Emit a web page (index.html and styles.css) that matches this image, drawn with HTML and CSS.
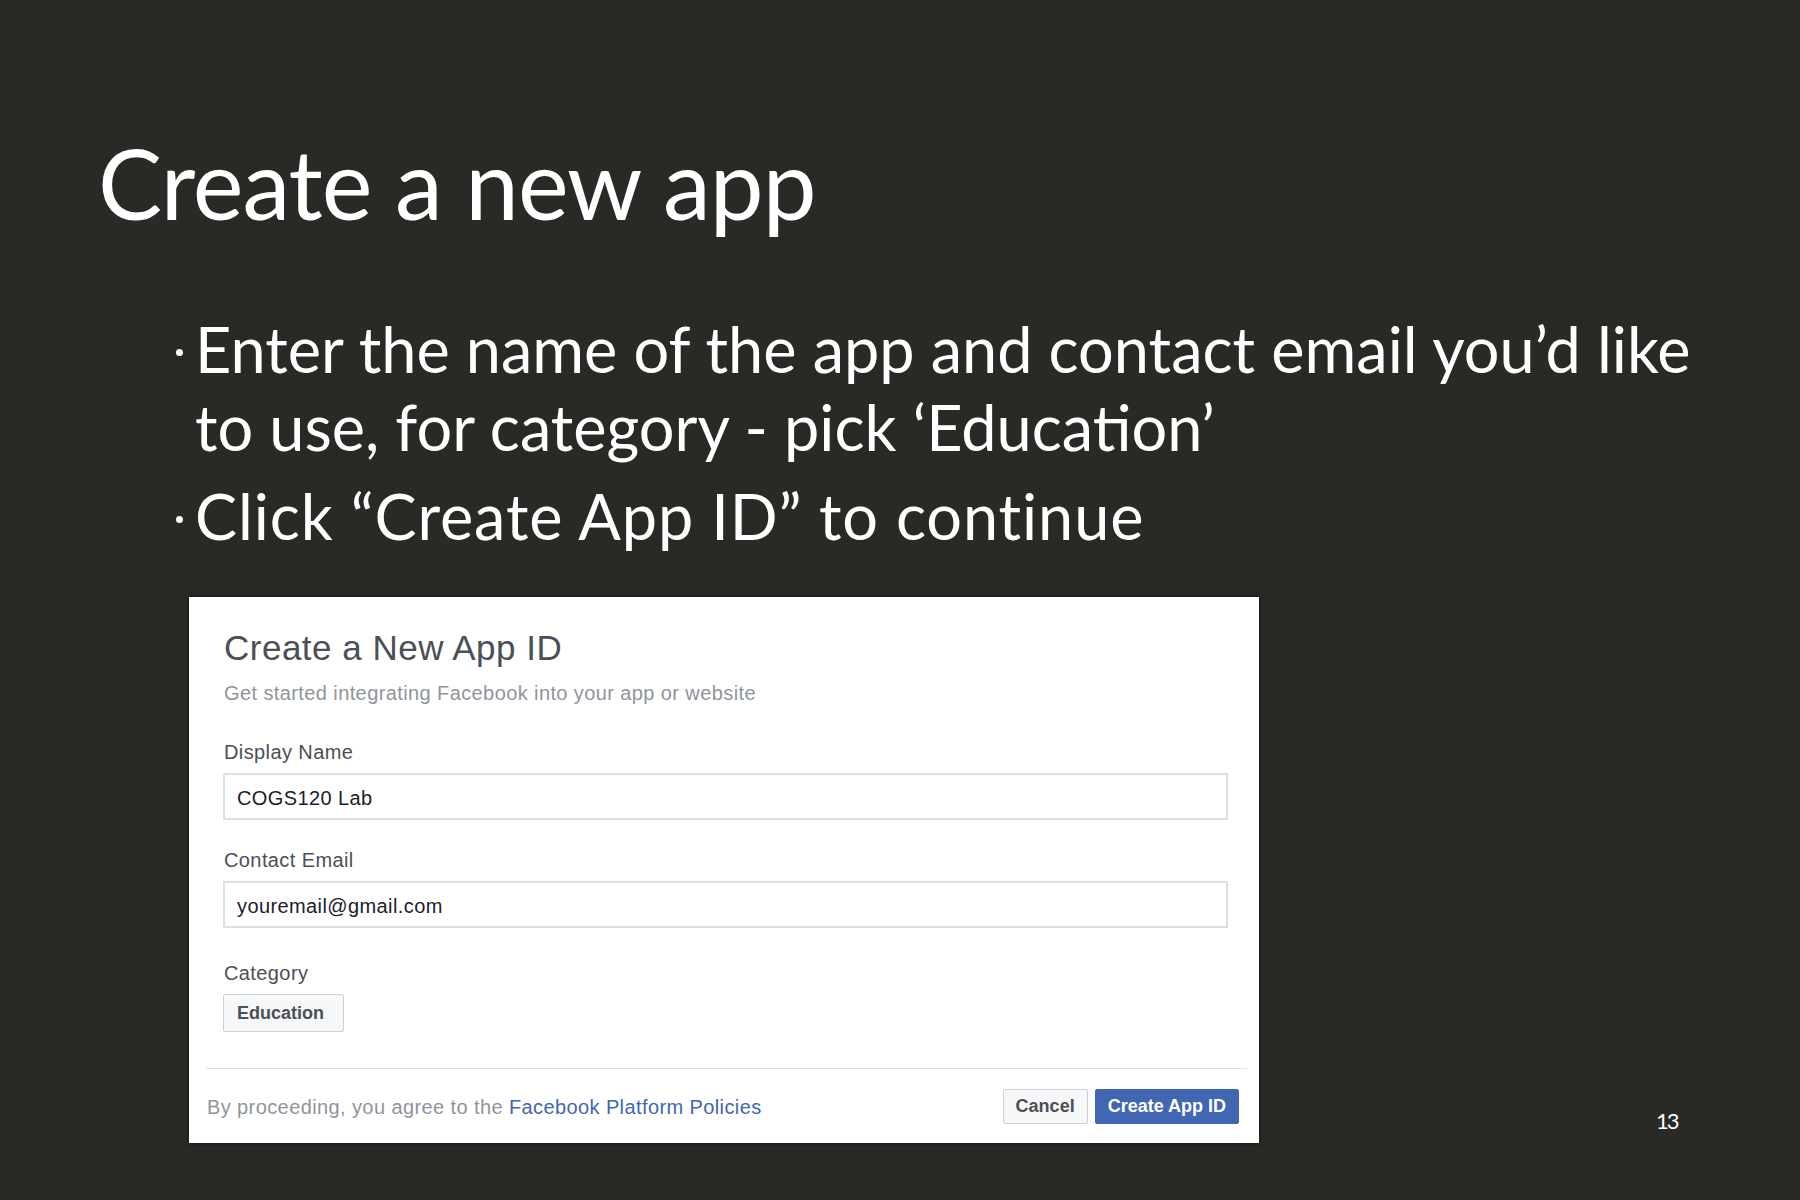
FILE: index.html
```html
<!DOCTYPE html>
<html>
<head>
<meta charset="utf-8">
<link rel="stylesheet" href="styles.css">
</head>
<body>
<div class="slide">
  <h1 class="slide-title">Create a new app</h1>
  <ul class="bullets">
    <li class="bullet"><span class="dot"></span><span class="btext">Enter the name of the app and contact email you’d like<br>to use, for category - pick ‘Education’</span></li>
    <li class="bullet"><span class="dot"></span><span class="btext btext-loose">Click “Create App ID” to continue</span></li>
  </ul>
  <div class="bottom-row">
    <div class="panel">
      <div class="panel-body">
        <div class="p-title">Create a New App ID</div>
        <div class="p-sub">Get started integrating Facebook into your app or website</div>
        <div class="field field-first">
          <div class="label">Display Name</div>
          <div class="input">COGS120 Lab</div>
        </div>
        <div class="field">
          <div class="label">Contact Email</div>
          <div class="input">youremail@gmail.com</div>
        </div>
        <div class="field field-cat">
          <div class="label">Category</div>
          <div class="select">Education</div>
        </div>
      </div>
      <div class="panel-foot">
        <div class="foot-text">By proceeding, you agree to the <span class="link">Facebook Platform Policies</span></div>
        <div class="foot-buttons">
          <div class="btn btn-cancel">Cancel</div>
          <div class="btn btn-primary">Create App ID</div>
        </div>
      </div>
    </div>
    <div class="page-num">13</div>
  </div>
</div>
</body>
</html>
```
FILE: styles.css
```css
html, body {
  margin: 0;
  padding: 0;
}
body {
  background: #292925;
  width: 1800px;
  height: 1200px;
  overflow: hidden;
}
.slide {
  width: 1800px;
  height: 1200px;
  box-sizing: border-box;
  padding-top: 133px;
  font-family: Lato, "Open Sans", sans-serif;
  color: #ffffff;
}
.slide-title {
  margin: 0 0 0 98px;
  font-weight: 400;
  font-size: 96px;
  line-height: 100px;
  letter-spacing: -1px;
}
.bullets {
  list-style: none;
  margin: 77px 0 0 176px;
  padding: 0;
}
.bullet {
  display: flex;
  font-size: 63px;
  line-height: 78px;
}
.bullet + .bullet {
  margin-top: 11px;
}
.btext-loose {
  letter-spacing: 0.9px;
}
.dot {
  flex: none;
  width: 7px;
  height: 7px;
  border-radius: 50%;
  background: #fff;
  margin: 39px 12px 0 0;
}
.bottom-row {
  display: flex;
  align-items: flex-end;
  margin: 42px 0 0 189px;
}
.panel {
  width: 1070px;
  height: 546px;
  background: #fff;
  display: flex;
  flex-direction: column;
  box-shadow: 0 0 3px 1px rgba(0, 0, 0, 0.45);
  font-family: "Liberation Sans", Arial, sans-serif;
  color: #4b4f56;
}
.panel-body {
  padding: 31px 31px 0 35px;
}
.p-title {
  font-size: 35px;
  line-height: 40px;
  letter-spacing: 0.5px;
  color: #4b4f56;
}
.p-sub {
  margin-top: 13px;
  font-size: 20px;
  line-height: 24px;
  letter-spacing: 0.4px;
  color: #90949c;
}
.field {
  margin-top: 28px;
}
.field-first {
  margin-top: 35px;
}
.field-cat {
  margin-top: 33px;
}
.label {
  font-size: 20px;
  line-height: 24px;
  letter-spacing: 0.4px;
  color: #4b4f56;
}
.input {
  margin: 9px 0 0 -1px;
  height: 47px;
  box-sizing: border-box;
  border: 2px solid #dcdee3;
  padding: 11px 12px 0 12px;
  font-size: 20px;
  line-height: 24px;
  letter-spacing: 0.4px;
  color: #1d2129;
}
.select {
  display: inline-block;
  margin: 9px 0 0 -1px;
  height: 38px;
  box-sizing: border-box;
  border: 1px solid #ced0d4;
  border-radius: 2px;
  background: #f6f7f9;
  padding: 0 19px 0 13px;
  font-size: 18px;
  font-weight: 700;
  line-height: 36px;
  color: #4b4f56;
}
.panel-foot {
  margin: auto 12px 0 17px;
  border-top: 1px solid #dddfe2;
  padding: 20px 8px 19px 1px;
  display: flex;
  align-items: center;
  justify-content: space-between;
}
.foot-text {
  font-size: 20px;
  line-height: 24px;
  letter-spacing: 0.4px;
  color: #90949c;
}
.link {
  color: #4267b2;
}
.foot-buttons {
  display: flex;
  gap: 7px;
}
.btn {
  height: 35px;
  box-sizing: border-box;
  border: 1px solid #ced0d4;
  border-radius: 2px;
  padding: 0 12px;
  font-size: 18px;
  font-weight: 700;
  line-height: 33px;
}
.btn-cancel {
  background: #f6f7f9;
  color: #4b4f56;
}
.btn-primary {
  background: #4267b2;
  border-color: #4267b2;
  color: #fff;
}
.page-num {
  margin: 0 0 10px 397px;
  font-size: 22px;
  line-height: 24px;
  letter-spacing: -2px;
}
```
